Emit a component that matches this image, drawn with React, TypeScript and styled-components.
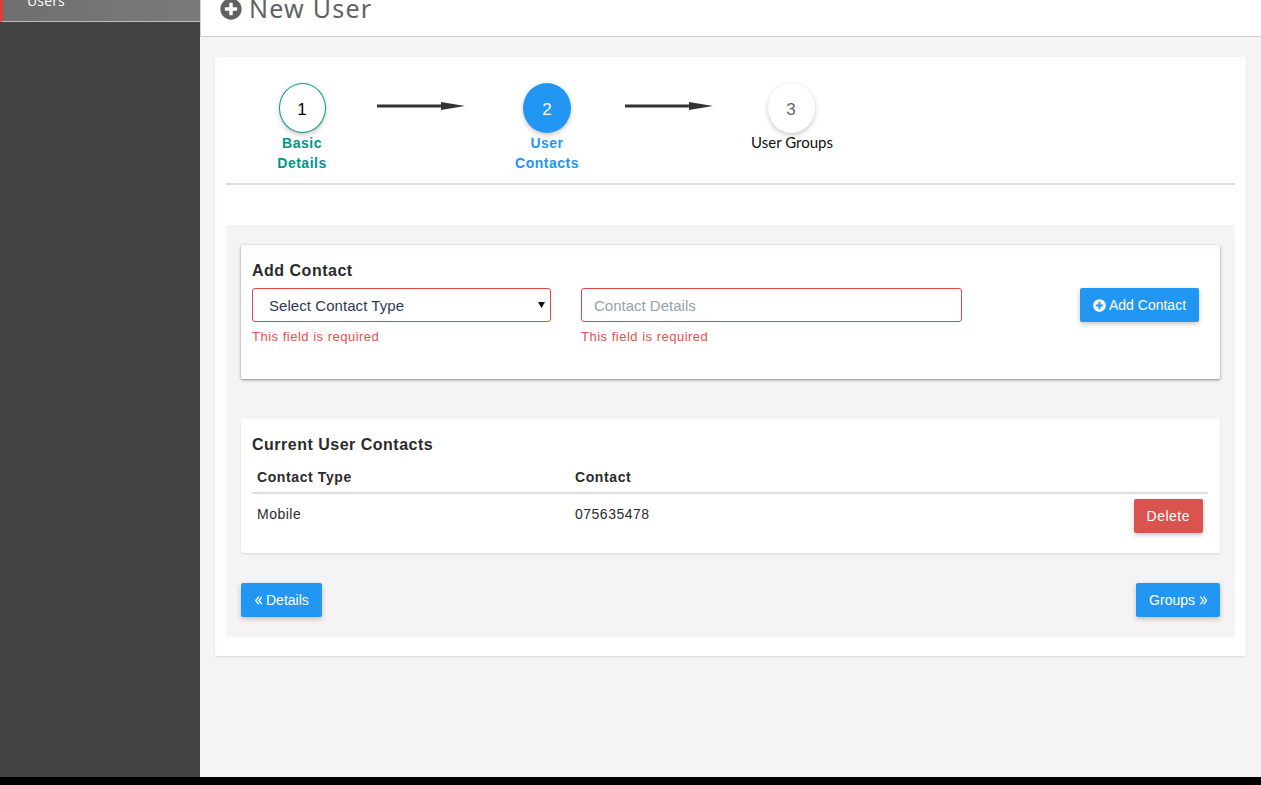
import React from "react";
import styled, { createGlobalStyle } from "styled-components";
import { FaPlusCircle } from "react-icons/fa";

const Global = createGlobalStyle`
  html, body { margin: 0; padding: 0; background: #000; height: 785px; overflow: hidden; }
  * { box-sizing: border-box; }
  body { font-family: "Liberation Sans", Arial, sans-serif; font-size: 14px; color: #333; letter-spacing: .5px; }
`;

const Shell = styled.div`
  display: flex;
  height: 777px;
  overflow: hidden;
  background: #f5f3f4;
`;
const Sidebar = styled.aside`
  width: 200px;
  flex: none;
  background: #434343;
`;
const ActiveItem = styled.div`
  height: 22px;
  display: flex;
  align-items: flex-end;
  padding: 0 0 13px 24px;
  background: linear-gradient(90deg, #6f6f6f, #7a7a7a);
  border-left: 3px solid #e53935;
  border-bottom: 1px solid #bdbdbd;
  color: #fff;
  font-family: "Open Sans", sans-serif;
  font-size: 14px;
  letter-spacing: .15px;
  line-height: 14px;
`;
const Main = styled.main`
  flex: 1;
  min-width: 0;
`;
const Header = styled.header`
  height: 37px;
  background: #fff;
  border-bottom: 1px solid #cfcfcf;
  border-left: 1px solid #d0d0d0;
  padding: 0 0 16px 19px;
  display: flex;
  align-items: flex-end;
  gap: 7px;
  color: #616161;
  overflow: hidden;
`;
const Title = styled.h1`
  margin: 0;
  font-family: "Noto Sans", sans-serif;
  font-weight: 400;
  font-size: 25px;
  line-height: 24px;
  letter-spacing: 1.25px;
`;
const Page = styled.div`
  margin: 20px 15px 0;
  height: 599px;
  background: #fff;
  border-radius: 2px;
  box-shadow: 0 1px 2px rgba(0, 0, 0, .1);
  padding: 0 11px;
`;
const Stepper = styled.div`
  height: 128px;
  border-bottom: 2px solid #ddd;
  padding: 26px 0 0 36px;
  display: grid;
  grid-template-columns: 80px 165px 80px 164px 80px;
  align-items: start;
`;
const Step = styled.div`
  display: flex;
  flex-direction: column;
  align-items: center;
`;
const Circle = styled.div<{ $kind: string }>`
  width: ${(p) => (p.$kind === "active" ? 48 : 47)}px;
  height: 50px;
  border-radius: 50%;
  display: flex;
  align-items: center;
  justify-content: center;
  font-family: "Liberation Sans", sans-serif;
  font-size: 17px;
  letter-spacing: 0;
  padding-top: 3px;
  background: ${(p) => (p.$kind === "active" ? "#2196f3" : "#fff")};
  color: ${(p) => (p.$kind === "active" ? "#fff" : p.$kind === "done" ? "#000" : "#666")};
  border: ${(p) => (p.$kind === "done" ? "1px solid #009688" : "none")};
  box-shadow: 0 2px 5px rgba(0, 0, 0, .22);
`;
const StepLabel = styled.div<{ $kind: string }>`
  text-align: center;
  font-weight: 700;
  line-height: 20px;
  color: ${(p) => (p.$kind === "active" ? "#2196f3" : "#009688")};
`;
const PlainLabel = styled.div`
  font-family: Lato, sans-serif;
  font-size: 15px;
  line-height: 18px;
  padding-left: 2px;
  color: #111;
  white-space: nowrap;
  letter-spacing: 0;
`;
const Arrow = styled.svg<{ $offset: number }>`
  display: block;
  margin: 18px 0 0 ${(p) => p.$offset}px;
`;
const Panel = styled.section`
  margin-top: 40px;
  height: 412px;
  background: #f5f3f4;
  padding: 20px 15px;
`;
const AddCard = styled.div`
  height: 134px;
  background: #fff;
  border-radius: 2px;
  box-shadow: 0 1px 3px rgba(0, 0, 0, .45);
  padding: 16px 11px;
`;
const ListCard = styled.div`
  margin-top: 40px;
  height: 134px;
  background: #fff;
  border-radius: 2px;
  box-shadow: 0 1px 2px rgba(0, 0, 0, .12);
  padding: 16px 12px 0 11px;
`;
const CardTitle = styled.h3`
  margin: 0;
  font-size: 16px;
  line-height: 20px;
  font-weight: 700;
  color: #2b2b2b;
`;
const FormRow = styled.div`
  margin-top: 7px;
  display: flex;
  align-items: flex-start;
`;
const Field = styled.div<{ $w: number; $gap: number }>`
  width: ${(p) => p.$w}px;
  margin-right: ${(p) => p.$gap}px;
  flex: none;
`;
const SelectBox = styled.div`
  position: relative;
`;
const Select = styled.select`
  display: block;
  width: 100%;
  height: 34px;
  border: 1px solid #e04848;
  border-radius: 3px;
  background: #fff;
  padding-left: 16px;
  appearance: none;
  font: 15px "Liberation Sans", sans-serif;
  letter-spacing: .06px;
  color: #2e3a5a;
`;
const Caret = styled.svg`
  position: absolute;
  top: 14px;
  right: 6px;
  pointer-events: none;
`;
const Input = styled.input`
  display: block;
  width: 100%;
  height: 34px;
  border: 1px solid #e04848;
  border-radius: 3px;
  background: #fff;
  padding: 0 12px;
  font: 15px "Liberation Sans", sans-serif;
  letter-spacing: 0;
  &::placeholder { color: #94a3ae; opacity: 1; }
`;
const ErrorText = styled.div`
  margin-top: 7px;
  font-size: 13px;
  line-height: 16px;
  color: #e5504b;
  letter-spacing: .5px;
`;
const Button = styled.button<{ $danger?: boolean; $left?: number }>`
  height: 34px;
  border: 0;
  border-radius: 2px;
  padding: 0 13px 0 ${(p) => p.$left ?? 13}px;
  background: ${(p) => (p.$danger ? "#d9534f" : "#2196f3")};
  color: #fff;
  font: 14px "Liberation Sans", sans-serif;
  letter-spacing: ${(p) => (p.$danger ? ".5px" : "0")};
  display: inline-flex;
  align-items: center;
  box-shadow: 0 2px 5px rgba(0, 0, 0, .22);
`;
const ButtonIcon = styled(FaPlusCircle)`
  margin-right: 3px;
`;
const AddButton = styled(Button)`
  margin-left: 118px;
`;
const AngleIcon = styled.svg<{ $side: string }>`
  margin: ${(p) => (p.$side === "left" ? "0 4px 0 0" : "0 0 0 5px")};
`;
const Table = styled.table`
  width: 100%;
  margin-top: 7px;
  border-collapse: collapse;
  table-layout: fixed;
`;
const Th = styled.th<{ $w?: number }>`
  text-align: left;
  padding: 5px;
  height: 30px;
  font-weight: 700;
  line-height: 20px;
  letter-spacing: .6px;
  color: #2b2b2b;
  border-bottom: 2px solid #ddd;
  width: ${(p) => (p.$w ? `${p.$w}px` : "auto")};
`;
const Td = styled.td<{ $right?: boolean }>`
  padding: 5px 5px 0;
  height: 44px;
  vertical-align: top;
  line-height: 30px;
  color: #2b2b2b;
  text-align: ${(p) => (p.$right ? "right" : "left")};
`;
const Nav = styled.div`
  margin-top: 30px;
  display: flex;
  justify-content: space-between;
`;

function StepArrow({ offset }: { offset: number }) {
  return (
    <Arrow $offset={offset} width="88" height="10" viewBox="0 0 88 10">
      <path d="M0 3.5H64V1L88 5 64 9V6.5H0Z" fill="#333" />
    </Arrow>
  );
}

function Angles({ side }: { side: "left" | "right" }) {
  const d =
    side === "left"
      ? "M3.8 .7 .7 4.5 3.8 8.3M7 .7 3.9 4.5 7 8.3"
      : "M.3 .7 3.4 4.5 .3 8.3M3.5 .7 6.6 4.5 3.5 8.3";
  return (
    <AngleIcon $side={side} width="7" height="9" viewBox="0 0 7 9">
      <path d={d} fill="none" stroke="#fff" strokeWidth="1.3" />
    </AngleIcon>
  );
}

export default function App() {
  return (
    <>
      <Global />
      <Shell>
        <Sidebar>
          <ActiveItem>Users</ActiveItem>
        </Sidebar>
        <Main>
          <Header>
            <FaPlusCircle size={22} />
            <Title>New User</Title>
          </Header>
          <Page>
            <Stepper>
              <Step>
                <Circle $kind="done">1</Circle>
                <StepLabel $kind="done">Basic Details</StepLabel>
              </Step>
              <StepArrow offset={35} />
              <Step>
                <Circle $kind="active">2</Circle>
                <StepLabel $kind="active">User Contacts</StepLabel>
              </Step>
              <StepArrow offset={38} />
              <Step>
                <Circle $kind="todo">3</Circle>
                <PlainLabel>User Groups</PlainLabel>
              </Step>
            </Stepper>
            <Panel>
              <AddCard>
                <CardTitle>Add Contact</CardTitle>
                <FormRow>
                  <Field $w={299} $gap={30}>
                    <SelectBox>
                      <Select defaultValue="">
                        <option value="">Select Contact Type</option>
                      </Select>
                      <Caret width="7" height="6" viewBox="0 0 7 6">
                        <path d="M0 0H7L3.5 6Z" fill="#111" />
                      </Caret>
                    </SelectBox>
                    <ErrorText>This field is required</ErrorText>
                  </Field>
                  <Field $w={381} $gap={0}>
                    <Input placeholder="Contact Details" />
                    <ErrorText>This field is required</ErrorText>
                  </Field>
                  <AddButton>
                    <ButtonIcon size={13} /> Add Contact
                  </AddButton>
                </FormRow>
              </AddCard>
              <ListCard>
                <CardTitle>Current User Contacts</CardTitle>
                <Table>
                  <thead>
                    <tr>
                      <Th $w={318}>Contact Type</Th>
                      <Th $w={400}>Contact</Th>
                      <Th />
                    </tr>
                  </thead>
                  <tbody>
                    <tr>
                      <Td>Mobile</Td>
                      <Td>075635478</Td>
                      <Td $right>
                        <Button $danger>Delete</Button>
                      </Td>
                    </tr>
                  </tbody>
                </Table>
              </ListCard>
              <Nav>
                <Button $left={14}>
                  <Angles side="left" />
                  Details
                </Button>
                <Button>
                  Groups
                  <Angles side="right" />
                </Button>
              </Nav>
            </Panel>
          </Page>
        </Main>
      </Shell>
    </>
  );
}
